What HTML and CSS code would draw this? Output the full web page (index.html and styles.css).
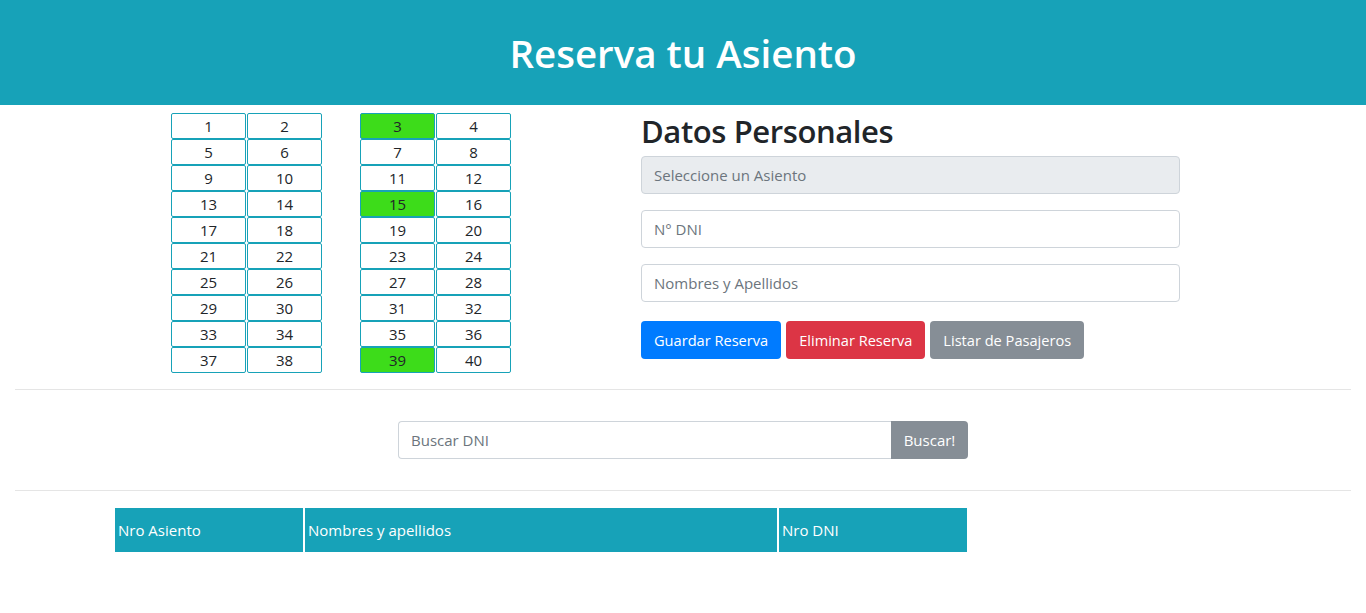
FILE: index.html
```html
<!DOCTYPE html>
<html lang="es">
<head>
<meta charset="utf-8">
<title>Reserva tu Asiento</title>
<link rel="stylesheet" href="styles.css">
</head>
<body>
<header class="banner">
  <h1 class="banner-title">Reserva tu Asiento</h1>
</header>
<main class="page">
  <section class="booking">
    <div class="seat-map">
      <div class="seat-block">
        <button class="seat">1</button><button class="seat">2</button>
        <button class="seat">5</button><button class="seat">6</button>
        <button class="seat">9</button><button class="seat">10</button>
        <button class="seat">13</button><button class="seat">14</button>
        <button class="seat">17</button><button class="seat">18</button>
        <button class="seat">21</button><button class="seat">22</button>
        <button class="seat">25</button><button class="seat">26</button>
        <button class="seat">29</button><button class="seat">30</button>
        <button class="seat">33</button><button class="seat">34</button>
        <button class="seat">37</button><button class="seat">38</button>
      </div>
      <div class="seat-block">
        <button class="seat seat-taken">3</button><button class="seat">4</button>
        <button class="seat">7</button><button class="seat">8</button>
        <button class="seat">11</button><button class="seat">12</button>
        <button class="seat seat-taken">15</button><button class="seat">16</button>
        <button class="seat">19</button><button class="seat">20</button>
        <button class="seat">23</button><button class="seat">24</button>
        <button class="seat">27</button><button class="seat">28</button>
        <button class="seat">31</button><button class="seat">32</button>
        <button class="seat">35</button><button class="seat">36</button>
        <button class="seat seat-taken">39</button><button class="seat">40</button>
      </div>
    </div>
    <form class="details">
      <h2 class="details-title">Datos Personales</h2>
      <div class="field"><input class="input" type="text" placeholder="Seleccione un Asiento" disabled></div>
      <div class="field"><input class="input" type="text" placeholder="N° DNI"></div>
      <div class="field"><input class="input" type="text" placeholder="Nombres y Apellidos"></div>
      <div class="actions">
        <button type="button" class="btn btn-primary">Guardar Reserva</button>
        <button type="button" class="btn btn-danger">Eliminar Reserva</button>
        <button type="button" class="btn btn-secondary">Listar de Pasajeros</button>
      </div>
    </form>
  </section>
  <hr class="divider">
  <div class="search">
    <input class="search-input" type="text" placeholder="Buscar DNI">
    <button type="button" class="search-btn">Buscar!</button>
  </div>
  <hr class="divider">
  <table class="passengers">
    <thead>
      <tr>
        <th class="col-seat">Nro Asiento</th>
        <th class="col-name">Nombres y apellidos</th>
        <th class="col-dni">Nro DNI</th>
      </tr>
    </thead>
    <tbody></tbody>
  </table>
</main>
</body>
</html>
```
FILE: styles.css
```css
* { box-sizing: border-box; }
html, body { margin: 0; padding: 0; }
body {
  font-family: "Open Sans", "Noto Sans", Arial, sans-serif;
  font-size: 16px;
  color: #212529;
  background: #fff;
}
.banner {
  background: #17a2b8;
  height: 105px;
  display: flex;
  align-items: center;
  justify-content: center;
}
.banner-title {
  margin: 0;
  color: #fff;
  font-size: 38.5px;
  font-weight: 600;
  line-height: 48px;
}
.page { padding: 0 15px; }
.booking {
  display: flex;
  align-items: flex-start;
}
.seat-map {
  display: flex;
  gap: 38px;
  margin-left: 156px;
  margin-top: 8px;
}
.seat-block {
  display: grid;
  grid-template-columns: 75px 75px;
  grid-auto-rows: 26px;
  column-gap: 1px;
}
.seat {
  font-family: inherit;
  font-size: 15px;
  color: #212529;
  background: #fff;
  border: 1px solid #17a2b8;
  border-radius: 2px;
  padding: 0;
  line-height: 24px;
}
.seat-taken { background: #3ddc1a; }
.details {
  margin-left: 130px;
  width: 539px;
  margin-top: 7px;
}
.details-title {
  margin: 0 0 6px;
  font-size: 31px;
  font-weight: 600;
  letter-spacing: -0.4px;
  line-height: 38px;
}
.field { margin-bottom: 16px; }
.input {
  display: block;
  width: 100%;
  height: 38px;
  padding: 6px 12px;
  font-family: inherit;
  font-size: 15px;
  color: #495057;
  background: #fff;
  border: 1px solid #ced4da;
  border-radius: 4px;
}
.input::placeholder, .search-input::placeholder { color: #6c757d; }
.input:disabled { background: #e9ecef; }
.actions {
  display: flex;
  gap: 5px;
  padding-top: 3px;
}
.btn {
  height: 38px;
  padding: 6px 12px;
  font-family: inherit;
  font-size: 14.6px;
  color: #fff;
  border: 1px solid transparent;
  border-radius: 4px;
}
.btn-primary { background: #007bff; }
.btn-danger { background: #dc3545; }
.btn-secondary { background: #868e96; }
.divider {
  margin: 16px 0;
  border: 0;
  border-top: 1px solid rgba(0,0,0,.1);
}
.search {
  display: flex;
  width: 570px;
  margin: 31px auto;
}
.search-input {
  flex: 1;
  height: 38px;
  padding: 6px 12px;
  font-family: inherit;
  font-size: 15px;
  border: 1px solid #ced4da;
  border-right: 0;
  border-radius: 4px 0 0 4px;
}
.search-btn {
  width: 77px;
  height: 38px;
  font-family: inherit;
  font-size: 15px;
  color: #fff;
  background: #868e96;
  border: 0;
  border-radius: 0 4px 4px 0;
}
.passengers {
  margin-left: 98px;
  margin-top: -1px;
  width: 856px;
  border-collapse: separate;
  border-spacing: 2px;
}
.passengers th {
  background: #17a2b8;
  color: #fff;
  font-weight: 400;
  text-align: left;
  height: 44px;
  padding: 0 3px;
  font-size: 15px;
}
.col-seat { width: 188px; }
.col-dni { width: 188px; }
```
